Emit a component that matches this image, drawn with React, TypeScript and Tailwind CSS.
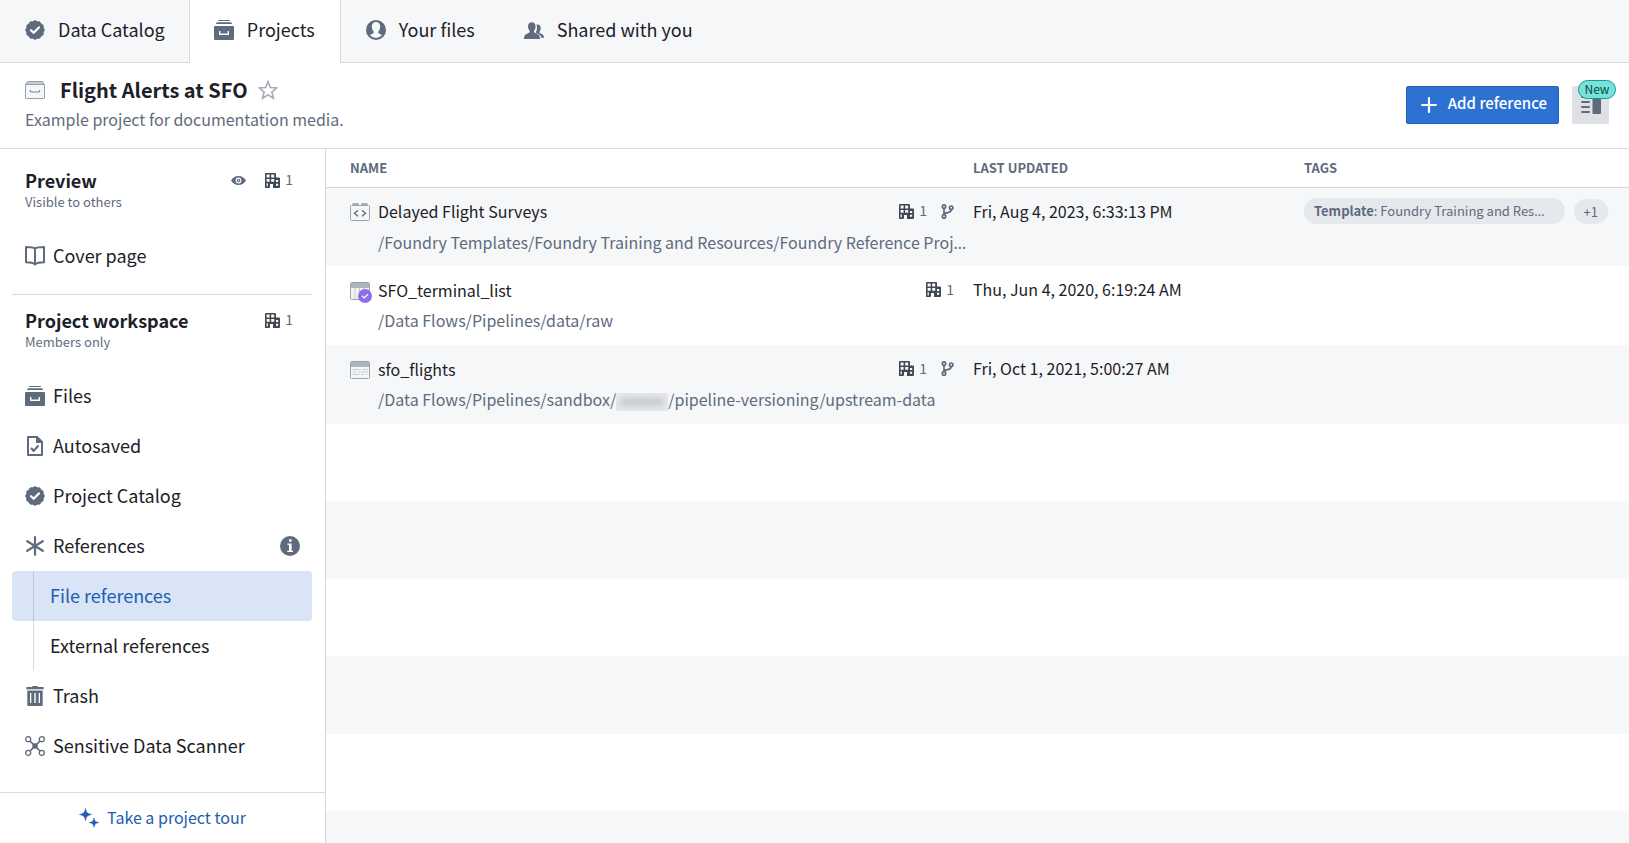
import type { ReactNode } from 'react';
import clsx from 'clsx';

type IconProps = { className?: string };

function EndorsedIcon({ className = 'size-5' }: IconProps) {
  const points = Array.from({ length: 24 }, (_, i) => {
    const r = i % 2 === 0 ? 9.4 : 8.5;
    const a = (i * Math.PI) / 12;
    return `${(10 + r * Math.sin(a)).toFixed(2)},${(10 - r * Math.cos(a)).toFixed(2)}`;
  }).join(' ');

  return (
    <svg viewBox="0 0 20 20" className={className} aria-hidden="true">
      <polygon points={points} fill="currentColor" stroke="currentColor" strokeWidth="1" strokeLinejoin="round" />
      <path d="M6 10.2l2.7 2.6 5.2-5.400" fill="none" stroke="#fff" strokeWidth="2.200" strokeLinecap="round" strokeLinejoin="round" />
    </svg>
  );
}

function ProjectsIcon({ className = 'size-5' }: IconProps) {
  return (
    <svg viewBox="0 0 20 20" className={className} fill="currentColor" aria-hidden="true">
      <path d="M5 0h10a1 1 0 011 1H4a1 1 0 011-1z" />
      <path d="M3.5 2.2h13a1.500 1.500 0 011.400 1.800H2.100a1.500 1.500 0 011.400-1.800z" />
      <path
        fillRule="evenodd"
        d="M1 6h18a1 1 0 011 1v12a1 1 0 01-1 1H1a1 1 0 01-1-1V7a1 1 0 011-1zm4 5v3.200a.8.8 0 00.8.8h8.400a.8.8 0 00.8-.8V11h-1.400v2.600H6.400V11z"
      />
    </svg>
  );
}

function UserIcon({ className = 'size-5' }: IconProps) {
  return (
    <svg viewBox="0 0 20 20" className={className} fill="currentColor" aria-hidden="true">
      <path
        fillRule="evenodd"
        d="M10 0a10 10 0 100 20 10 10 0 000-20zm0 2c2.500 0 4.200 1.700 4.200 4.300 0 1.900-.5 3.500-1.500 4.600-.5.600-.5 1.900.1 2.400.9.700 2.400 1 3.100 1.900A8 8 0 0110 18a8 8 0 01-5.900-2.800c.7-.9 2.200-1.200 3.100-1.900.6-.5.6-1.800.1-2.400-1-1.100-1.500-2.700-1.500-4.600C5.800 3.700 7.500 2 10 2z"
      />
    </svg>
  );
}

function PeopleIcon({ className = 'size-5' }: IconProps) {
  return (
    <svg viewBox="0 0 20 20" className={className} fill="currentColor" aria-hidden="true">
      <path d="M7.800 2.200c2.400 0 3.800 1.700 3.800 4 0 1.800-.5 3.200-1.300 4.200-.5.600-.5 1.800.1 2.200 1.500 1 4.300 1.700 5 3.100.4.800.5 1.900.6 3.300H0c0-1.400.1-2.500.5-3.300.7-1.400 3.400-2.100 4.800-3.100.6-.4.6-1.600.1-2.200-.8-1-1.400-2.400-1.400-4.200 0-2.300 1.400-4 3.800-4z" />
      <path d="M12.400 4.700c2.500-.7 4.300.8 4.300 3.200 0 1.500-.4 2.700-1.100 3.500-.4.500-.4 1.300.1 1.700 1.200.8 3.200 1.300 3.800 2.300.3.500.4 1.300.5 2.300h-2.700c-.4-2.700-2-3.400-5.200-4.800-.4-.2-.4-.8-.1-1.200 1.200-1.900 1.500-4.800.4-7z" />
    </svg>
  );
}

function BuildingIcon({ className = 'size-[15px]' }: IconProps) {
  return (
    <svg viewBox="0 0 15 15" className={clsx('shrink-0 text-[#404854]', className)} fill="currentColor" aria-hidden="true">
      <path
        fillRule="evenodd"
        d="M1 0h9a1 1 0 011 1v3.500h3a1 1 0 011 1V14a1 1 0 01-1 1H8v-4H5v3a1 1 0 01-1 1H0V1a1 1 0 011-1zM1.600 1.600v2.800h3V1.600zM6.200 1.600v2.800h3V1.600zM1.600 5.900v2.800h3V5.900zM6.200 5.900v2.800h3V5.900zM1.600 10.300v3.200h1.200v-3.200zM11 7v2h2.200V7zM11 10.700v2h2.200v-2z"
      />
    </svg>
  );
}

function BranchIcon() {
  return (
    <svg viewBox="0 0 13 15" className="h-[15px] w-[13px] shrink-0 text-[#5f6b7c]" fill="none" stroke="currentColor" strokeWidth="1.700" aria-hidden="true">
      <circle cx="3" cy="2.600" r="1.700" />
      <circle cx="10.200" cy="3.700" r="1.700" />
      <circle cx="3" cy="12.400" r="1.700" />
      <path d="M3 4.300v6.400M10.200 5.400c0 2.600-1.700 3-3.600 3.200C4.500 8.800 3.300 9.300 3 10.700" />
    </svg>
  );
}

function EyeIcon() {
  return (
    <svg viewBox="0 0 15 15" className="size-[15px] text-[#5f6b7c]" fill="currentColor" aria-hidden="true">
      <path
        fillRule="evenodd"
        d="M7.500 3C10.800 3 13.600 5 15 7.500 13.600 10 10.800 12 7.500 12S1.400 10 0 7.500C1.400 5 4.200 3 7.500 3zm0 1.600a2.900 2.900 0 100 5.800 2.900 2.900 0 000-5.800z"
      />
      <path fillRule="evenodd" d="M7.500 5.700a1.800 1.800 0 100 3.600 1.800 1.800 0 000-3.600zm0 1.100a.7.700 0 110 1.400.7.700 0 010-1.400z" />
    </svg>
  );
}

function BookIcon() {
  return (
    <svg viewBox="0 0 20 20" className="size-5" fill="none" stroke="currentColor" strokeWidth="2" strokeLinejoin="round" aria-hidden="true">
      <path d="M10 2.500C8.500 1.400 4.500 1 1 1v15.300c3.600 0 7.500.7 9 2.200 1.500-1.500 5.400-2.200 9-2.200V1c-3.500 0-7.500.4-9 1.500zM10 2.500v16" />
    </svg>
  );
}

function SavedDocIcon() {
  return (
    <svg viewBox="0 0 20 20" className="size-5" aria-hidden="true">
      <path fillRule="evenodd" fill="currentColor" d="M3 0h9.500l5.500 5.500V19a1 1 0 01-1 1H3a1 1 0 01-1-1V1a1 1 0 011-1zm1 2v16h12V7h-5V2z" />
      <path d="M6.600 12.600l2.100 2.300 4.200-4.800" fill="none" stroke="currentColor" strokeWidth="2.200" strokeLinecap="round" strokeLinejoin="round" />
    </svg>
  );
}

function AsteriskIcon() {
  return (
    <svg viewBox="0 0 20 20" className="size-5" fill="none" stroke="currentColor" strokeWidth="2.200" strokeLinecap="round" aria-hidden="true">
      <path d="M10 1.200v17.600M2.200 5.200l15.600 9.600M17.800 5.200L2.200 14.800" />
    </svg>
  );
}

function InfoIcon() {
  return (
    <svg viewBox="0 0 20 20" className="ml-auto size-5 text-[#5f6b7c]" role="img" aria-label="About references">
      <circle cx="10" cy="10" r="10" fill="currentColor" />
      <path d="M9 3.200h2.600v2.600H9zM7.500 7.600h4.100v7.100H13V16H7.200v-1.300H9V8.900H7.500z" fill="#fff" />
    </svg>
  );
}

function TrashIcon() {
  return (
    <svg viewBox="0 0 20 20" className="size-5" fill="currentColor" aria-hidden="true">
      <path d="M7.300 0h5.400v1H18a.7.700 0 01.7.7V3.200H1.300V1.700A.7.700 0 012 1h5.300z" />
      <path fillRule="evenodd" d="M2.300 4.500h15.400V19a1 1 0 01-1 1H3.300a1 1 0 01-1-1zM5 7v10h1.300V7zm4.300 0v10h1.400V7zm4.400 0v10H15V7z" />
    </svg>
  );
}

function GraphIcon() {
  return (
    <svg viewBox="0 0 20 20" className="size-5" fill="none" stroke="currentColor" strokeWidth="1.300" aria-hidden="true">
      <circle cx="3.200" cy="3.200" r="2.500" />
      <circle cx="16.800" cy="3.200" r="2.500" />
      <circle cx="3.200" cy="16.800" r="2.500" />
      <circle cx="16.800" cy="16.800" r="2.500" />
      <path d="M5 5l10 10M15 5L5 15" strokeWidth="1.600" />
      <rect x="8" y="8" width="4" height="4" fill="currentColor" />
    </svg>
  );
}

function SparklesIcon() {
  return (
    <svg viewBox="0 0 20 20" className="size-5" fill="currentColor" aria-hidden="true">
      <path d="M6.500.5c.7 4 1.800 5.100 6 6-4.200.9-5.300 2-6 6-.7-4-1.800-5.100-6-6 4.200-.9 5.300-2 6-6z" stroke="currentColor" strokeWidth=".6" strokeLinejoin="round" />
      <path d="M15 10c.5 3 1.400 4 4.700 4.600C16.400 15.200 15.500 16.200 15 19.200c-.5-3-1.400-4-4.700-4.600C13.600 14 14.500 13 15 10z" stroke="currentColor" strokeWidth=".6" strokeLinejoin="round" />
    </svg>
  );
}

function ProjectBoxIcon() {
  return (
    <svg viewBox="0 0 20 18" className="h-[18px] w-5" aria-hidden="true">
      <path d="M2.500.5h15l2 3.500H.5z" fill="#c5cbd3" stroke="#9a9fa6" />
      <rect x=".5" y="3.500" width="19" height="14" rx=".5" fill="#f3f7fa" stroke="#9a9fa6" />
      <path d="M5.300 9v.8a1.200 1.200 0 001.200 1.200h7a1.200 1.200 0 001.200-1.200V9" fill="none" stroke="#738694" strokeWidth="1.200" />
    </svg>
  );
}

function StarIcon() {
  return (
    <svg viewBox="0 0 20 20" className="size-5" fill="none" stroke="#a3abb6" strokeWidth="1.600" aria-hidden="true">
      <path d="M10 1.800l2.400 5.700 6.200.5-4.700 4 1.500 6.200L10 14.900l-5.400 3.300L6.100 12 1.400 8l6.200-.5z" />
    </svg>
  );
}

function CodeTemplateIcon() {
  return (
    <svg viewBox="0 0 20 18" className="h-[18px] w-5" aria-hidden="true">
      <path d="M2.500 4V1.500a1 1 0 011-1h4a1 1 0 011 1V4zM11.500 4V1.500a1 1 0 011-1h4a1 1 0 011 1V4z" fill="#a9b3bc" stroke="#a7abb1" />
      <rect x=".5" y="2.500" width="19" height="15" rx="1" fill="#f3f7fa" stroke="#a0a4aa" />
      <path d="M8 7.200l-3.500 3L8 13.200M12 7.200l3.500 3-3.500 3" fill="none" stroke="#5c7080" strokeWidth="1.400" />
    </svg>
  );
}

function VerifiedTableIcon() {
  return (
    <svg viewBox="0 0 22 21" className="-mr-0.5 -mb-[3px] h-[21px] w-[22px]" aria-hidden="true">
      <rect x=".5" y=".5" width="19" height="17" rx="1" fill="#eff3f6" stroke="#a0a4aa" />
      <path d="M1 1h18v5H1z" fill="#aab7c1" />
      <path d="M5 6v11M9.500 6v11M14 6v11" stroke="#bcc7d0" />
      <circle cx="15" cy="14" r="7" fill="#8f6ce8" />
      <path d="M12.500 14.200l1.800 1.700 3.300-3.300" fill="none" stroke="#fff" strokeWidth="1.300" strokeLinecap="round" />
    </svg>
  );
}

function DatasetIcon() {
  return (
    <svg viewBox="0 0 20 18" className="h-[18px] w-5" aria-hidden="true">
      <rect x=".5" y=".5" width="19" height="17" rx="1" fill="#f5f8fa" stroke="#a0a4aa" />
      <path d="M1 1h18v5H1z" fill="#aab7c1" />
      <path d="M2.500 8.500h8M12 8.500h6M2.500 11h4M8 11h10M2.500 13.500h7M11 13.500h3M15.500 13.500h2" stroke="#c4ccd3" />
    </svg>
  );
}

const tabs = [
  { label: 'Data Catalog', icon: <EndorsedIcon /> },
  { label: 'Projects', icon: <ProjectsIcon />, active: true },
  { label: 'Your files', icon: <UserIcon /> },
  { label: 'Shared with you', icon: <PeopleIcon /> },
];

// The CJK face centres its ellipsis, so borrow one that sits on the baseline
function Ellipsis() {
  return <span className="font-['Noto_Sans',sans-serif]">…</span>;
}

function Redacted() {
  return (
    <span className="inline-flex h-[18px] w-[52px] items-center overflow-hidden bg-[#e6e8eb] align-middle">
      <span className="mx-1 h-2 w-full rounded-full bg-[#c3c7cd] blur-[3px]" />
    </span>
  );
}

type Reference = {
  name: string;
  path: ReactNode;
  icon: ReactNode;
  branch: boolean;
  updated: string;
  tag?: string;
  moreTags?: number;
};

const references: Reference[] = [
  {
    name: 'Delayed Flight Surveys',
    path: (
      <>
        /Foundry Templates/Foundry Training and Resources/Foundry Reference Proj
        <Ellipsis />
      </>
    ),
    icon: <CodeTemplateIcon />,
    branch: true,
    updated: 'Fri, Aug 4, 2023, 6:33:13 PM',
    tag: 'Foundry Training and Res',
    moreTags: 1,
  },
  {
    name: 'SFO_terminal_list',
    path: '/Data Flows/Pipelines/data/raw',
    icon: <VerifiedTableIcon />,
    branch: false,
    updated: 'Thu, Jun 4, 2020, 6:19:24 AM',
  },
  {
    name: 'sfo_flights',
    path: (
      <>
        /Data Flows/Pipelines/sandbox/
        <Redacted />
        /pipeline-versioning/upstream-data
      </>
    ),
    icon: <DatasetIcon />,
    branch: true,
    updated: 'Fri, Oct 1, 2021, 5:00:27 AM',
  },
];

function OrgCount({ count }: { count: number }) {
  return (
    <span className="flex items-center gap-[5px] text-sm leading-5 text-[#5f6b7c]">
      <BuildingIcon />
      <span className="pb-0.5">{count}</span>
    </span>
  );
}

function NavItem({ icon, label, children }: { icon: ReactNode; label: string; children?: ReactNode }) {
  return (
    <a href="#" className="flex h-[50px] items-center gap-2 rounded-sm pr-3 pl-[13px] text-lg text-[#1c2127]">
      <span className="shrink-0 text-[#5f6b7c]">{icon}</span>
      <span className="pb-0.5">{label}</span>
      {children}
    </a>
  );
}

function Sidebar() {
  return (
    <aside className="flex w-[326px] shrink-0 flex-col border-r border-[#d9dadd]">
      <nav className="pt-[17px] pr-[13px] pl-3">
        <div className="flex justify-between px-[13px]">
          <div>
            <h2 className="text-lg leading-7 font-bold">Preview</h2>
            <p className="text-[13px] leading-4 text-[#5f6b7c]">Visible to others</p>
          </div>
          <div className="mr-[6px] flex h-7 items-center gap-[19px]">
            <EyeIcon />
            <OrgCount count={1} />
          </div>
        </div>
        <div className="mt-[21px] border-b border-[#d9dadd] pb-[13px]">
          <NavItem icon={<BookIcon />} label="Cover page" />
        </div>

        <div className="mt-[11px] flex justify-between px-[13px]">
          <div>
            <h2 className="text-lg leading-7 font-bold">Project workspace</h2>
            <p className="text-[13px] leading-4 text-[#5f6b7c]">Members only</p>
          </div>
          <div className="mr-[6px] flex h-7 items-center">
            <OrgCount count={1} />
          </div>
        </div>
        <div className="mt-[21px]">
          <NavItem icon={<ProjectsIcon />} label="Files" />
          <NavItem icon={<SavedDocIcon />} label="Autosaved" />
          <NavItem icon={<EndorsedIcon />} label="Project Catalog" />
          <NavItem icon={<AsteriskIcon />} label="References">
            <InfoIcon />
          </NavItem>
          <a href="#" aria-current="page" className="block rounded-sm bg-[#d9e4f6] pl-[21px] text-lg text-[#215db0]">
            <span className="flex h-[50px] items-center border-l border-[#b9c5da] pb-0.5 pl-4">File references</span>
          </a>
          <a href="#" className="block pl-[21px] text-lg">
            <span className="flex h-[50px] items-center border-l border-[#d9dadd] pb-0.5 pl-4">External references</span>
          </a>
          <NavItem icon={<TrashIcon />} label="Trash" />
          <NavItem icon={<GraphIcon />} label="Sensitive Data Scanner" />
        </div>
      </nav>
      <div className="mt-auto border-t border-[#d9dadd]">
        <button type="button" className="flex h-[50px] w-full items-center justify-center gap-2 text-base text-[#215db0]">
          <SparklesIcon />
          <span className="pb-0.5">Take a project tour</span>
        </button>
      </div>
    </aside>
  );
}

function ReferencesTable() {
  return (
    <table className="w-full table-fixed border-collapse text-left">
      <thead>
        <tr className="h-[38px] border-b border-[#d3d5d9] text-[13px] text-[#5f6b7c]">
          <th className="pb-px pl-6 font-bold">NAME</th>
          <th className="w-[331px] pb-px pl-3 font-bold">LAST UPDATED</th>
          <th className="w-[337px] pb-px pl-3 font-bold">TAGS</th>
        </tr>
      </thead>
      <tbody className="text-base">
        {references.map((ref) => (
          <tr key={ref.name} className="h-[79px] align-top odd:bg-[#f6f7f9]">
            <td className="pt-2 pl-6">
              <div className="flex h-[31px] items-center gap-2">
                <span className="pt-0.5">{ref.icon}</span>
                <a href="#">{ref.name}</a>
                <div className="mr-[7px] ml-auto flex items-center gap-[14px]">
                  <OrgCount count={1} />
                  {ref.branch && <BranchIcon />}
                </div>
              </div>
              <p className="pl-7 leading-[31px] whitespace-nowrap text-[#5f6b7c]">{ref.path}</p>
            </td>
            <td className="pt-2 pl-3 leading-[31px]">{ref.updated}</td>
            <td className="pt-2 pr-[21px] pl-3">
              {ref.tag && (
                <div className="flex h-[31px] items-center gap-[9px] text-[13px] leading-[25px] text-[#5f6b7c]">
                  <span className="flex-1 rounded-full bg-[#e5e8ec] px-[10px] whitespace-nowrap">
                    <b>Template</b>: {ref.tag}
                    <Ellipsis />
                  </span>
                  <span className="rounded-full bg-[#e5e8ec] px-[10px]">+{ref.moreTags}</span>
                </div>
              )}
            </td>
          </tr>
        ))}
        {/* Zebra filler below the last reference */}
        {[0, 1, 2, 3, 4].map((i) => (
          <tr key={i} aria-hidden="true" className="h-[77px] odd:h-[78px] odd:bg-[#f6f7f9]">
            <td colSpan={3} />
          </tr>
        ))}
        <tr aria-hidden="true" className="h-8 odd:bg-[#f6f7f9]">
          <td colSpan={3} />
        </tr>
      </tbody>
    </table>
  );
}

export default function App() {
  return (
    <div className="flex h-screen flex-col overflow-hidden bg-white font-['Noto_Sans_CJK_SC',sans-serif] text-[#1c2127]">
      <nav className="flex h-[63px] shrink-0 border-b border-[#d9dadd] bg-[#f6f7f9]">
        {tabs.map((tab) => (
          <a
            key={tab.label}
            href="#"
            aria-current={tab.active ? 'page' : undefined}
            className={clsx(
              'flex items-center gap-[13px] text-lg',
              tab.active ? '-mb-px border-x border-[#d9dadd] bg-white pr-[25px] pb-[3px] pl-6' : 'pr-6 pb-[2px] pl-[25px]',
            )}
          >
            <span className="text-[#5f6b7c]">{tab.icon}</span>
            <span className="pb-0.5">{tab.label}</span>
          </a>
        ))}
      </nav>

      <header className="flex h-[86px] shrink-0 items-center justify-between border-b border-[#d9dadd] pr-5 pb-0.5 pl-[25px]">
        <div className="pb-0.5">
          <div className="flex items-center">
            <ProjectBoxIcon />
            <h1 className="mr-[10px] ml-[15px] text-xl leading-[30px] font-bold">Flight Alerts at SFO</h1>
            <button type="button" aria-label="Add to favorites">
              <StarIcon />
            </button>
          </div>
          <p className="text-base leading-7 text-[#5f6b7c]">Example project for documentation media.</p>
        </div>
        <div className="flex gap-[13px]">
          <button type="button" className="flex h-[38px] items-center gap-[11px] rounded-xs border border-[#2563b8] bg-[#2d72d2] pr-[11px] pl-[14px] text-[15px] font-medium text-white shadow-xs">
            <svg viewBox="0 0 16 16" className="size-4" stroke="currentColor" strokeWidth="2.200" strokeLinecap="round" aria-hidden="true">
              <path d="M8 1.100v13.800M1.100 8h13.800" />
            </svg>
            <span className="pb-0.5">Add reference</span>
          </button>
          <button type="button" aria-label="Toggle details panel" className="relative flex h-[38px] w-[37px] items-center justify-center rounded-xs bg-[#dfe0e5] text-[#5f6b7c]">
            <svg viewBox="0 0 20 18" className="h-[18px] w-5" fill="currentColor" aria-hidden="true">
              <rect x="11.500" y="0" width="8.500" height="18" rx="1" />
              <path d="M1 1h7M1 6h7M1 11h7M1 16h7" stroke="currentColor" strokeWidth="2" strokeLinecap="round" />
            </svg>
            <span className="absolute -top-[6px] -right-[7px] flex h-[19px] w-[38px] items-center justify-center rounded-full border border-[#00a396] bg-[#7ae1d8] pb-px text-xs text-[#004d46]">
              New
            </span>
          </button>
        </div>
      </header>

      <div className="flex min-h-0 flex-1">
        <Sidebar />
        <main className="min-w-0 flex-1 overflow-hidden">
          <ReferencesTable />
        </main>
      </div>
    </div>
  );
}
